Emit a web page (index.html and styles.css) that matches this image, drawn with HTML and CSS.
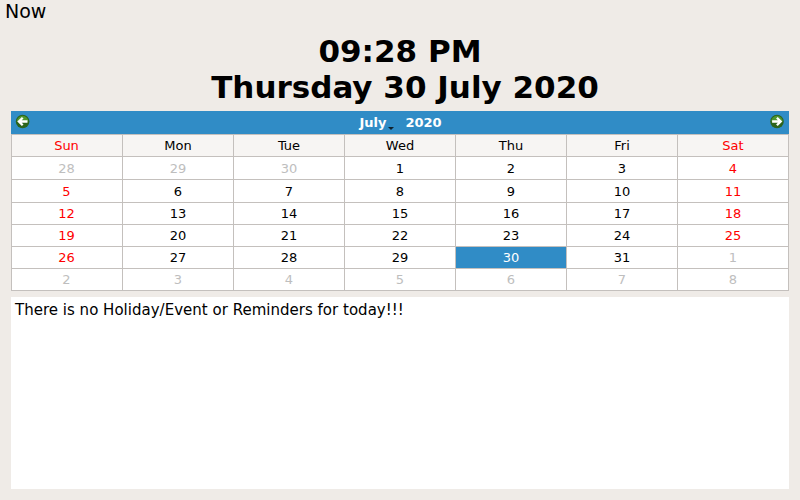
FILE: index.html
```html
<!DOCTYPE html>
<html lang="en">
<head>
<meta charset="utf-8">
<title>Now</title>
<link rel="stylesheet" href="styles.css">
</head>
<body>
<header class="title">Now</header>
<div class="clock"><div>09:28 PM</div><div class="date">Thursday 30 July 2020</div></div>
<section class="calendar">
<nav class="bar">
<svg class="arrow" viewBox="0 -0.5 14 15"><circle cx="6.6" cy="7" r="6.8" fill="#2c641c"/><path d="M.9 7a5.7 5.7 0 0 1 11.4 0z" fill="#4f972f"/><path d="M11.5 7H3.2M6.7 3.2 2.9 7l3.8 3.8" fill="none" stroke="#fff" stroke-width="2.3"/></svg>
<div class="period"><span class="month">July</span><span class="year">2020</span></div>
<svg class="arrow" viewBox="0 -0.5 14 15"><circle cx="7" cy="7" r="6.8" fill="#2c641c"/><path d="M1.3 7a5.7 5.7 0 0 1 11.4 0z" fill="#4f972f"/><path d="M2.100 7h8.3M6.900 3.2 10.7 7l-3.8 3.8" fill="none" stroke="#fff" stroke-width="2.3"/></svg>
</nav>
<div class="grid" id="grid"></div>
</section>
<main class="notes">There is no Holiday/Event or Reminders for today!!!</main>
<script src="script.js"></script>
</body>
</html>
```
FILE: styles.css
```css
* { box-sizing: border-box; }
body { margin: 0; width: 800px; height: 500px; overflow: hidden; background: #efebe7; color: #000; font-family: "DejaVu Sans", sans-serif; }
.title { height: 33px; padding: 0 5px; font-size: 19px; line-height: 23px; }
.clock { height: 78px; text-align: center; font-size: 31px; font-weight: bold; line-height: 36px; }
.date { padding-left: 10px; }
.calendar { margin: 0 11px; height: 180px; }
.bar { height: 23px; display: flex; justify-content: space-between; padding: 4px 5px; background: #308cc6; color: #fff; font-size: 13px; font-weight: bold; line-height: 16px; }
.arrow { width: 14px; height: 15px; margin-top: -1px; overflow: visible; }
.period { display: flex; gap: 19px; padding-left: 1px; }
.month { position: relative; }
.month::after { content: ""; position: absolute; right: -8px; bottom: 0; border: 3px solid transparent; border-top-color: #10212c; border-bottom: 0; }
.grid { display: grid; grid-template-columns: 112px repeat(6, 111px); grid-template-rows: 22px 23px 23px 22px 22px 22px 22px; border-top: 1px solid #c4c0bd; }
.cell { display: flex; align-items: center; justify-content: center; font-size: 13px; background: #fff; border-right: 1px solid #c4c0bd; border-bottom: 1px solid #c4c0bd; }
.cell:nth-child(7n+1) { border-left: 1px solid #c4c0bd; padding-right: 1px; }
.head { background: #f7f5f3; }
.weekend { color: #f00; }
.muted { color: #bebebe; }
.today { background: #308cc6; color: #fff; }
.notes { margin: 6px 11px 0; height: 192px; padding: 4px; background: #fff; font-size: 15px; line-height: 18px; letter-spacing: 0.015px; }
```
FILE: script.js
```js
const grid = document.getElementById('grid');
function add(text, type) {
  const cell = document.createElement('div');
  cell.className = 'cell ' + type;
  cell.textContent = text;
  grid.append(cell);
}
['Sun','Mon','Tue','Wed','Thu','Fri','Sat'].forEach((d, i) => add(d, 'head' + (i % 6 === 0 ? ' weekend' : '')));
for (let i = 0; i < 42; i++) {
  const date = new Date(2020, 5, 28 + i);
  const day = date.getDate();
  add(day, date.getMonth() !== 6 ? 'muted' : day === 30 ? 'today' : i % 7 === 0 || i % 7 === 6 ? 'weekend' : '');
}
```
